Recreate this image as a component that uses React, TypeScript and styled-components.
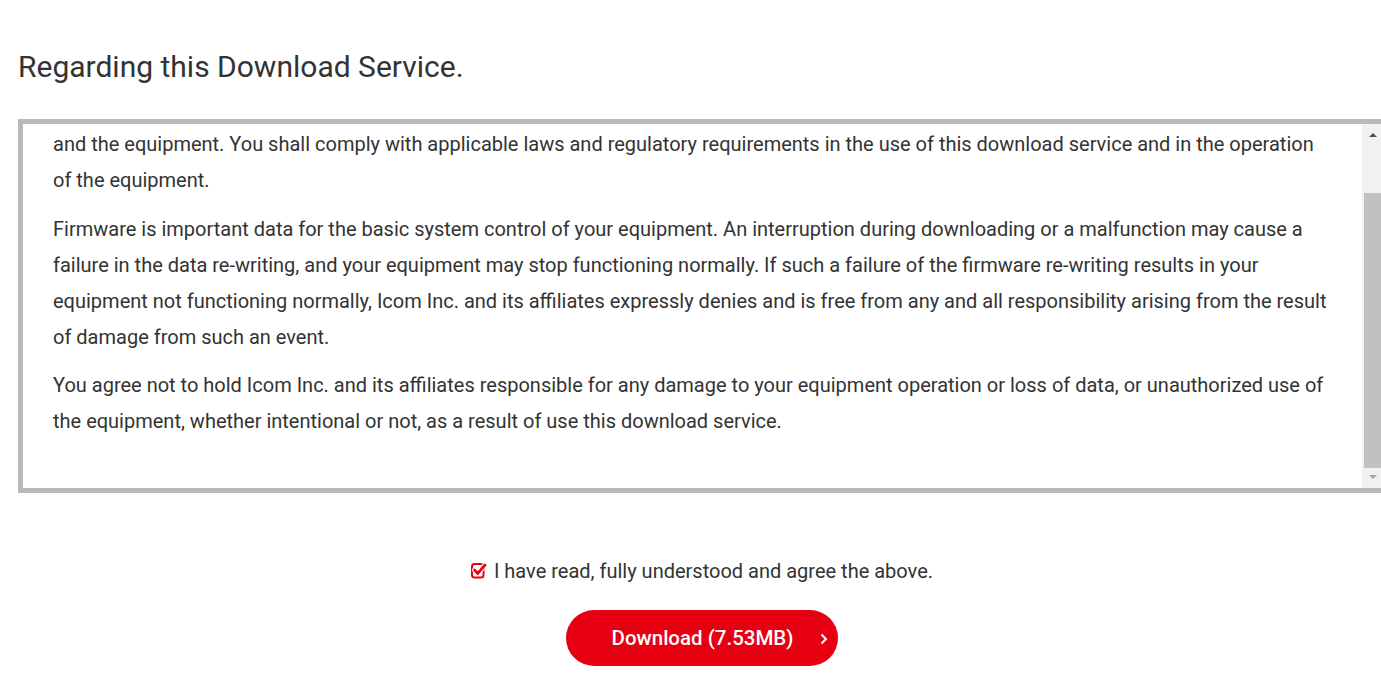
import React from "react";
import styled, { createGlobalStyle } from "styled-components";

const Global = createGlobalStyle`
  html, body {
    margin: 0;
    padding: 0;
    overflow: hidden;
    background: #ffffff;
  }
  body {
    font-family: Roboto, "Noto Sans", "Liberation Sans", sans-serif;
    color: #333333;
  }
`;

const Page = styled.main`
  width: 1368px;
  margin-left: 18px;
  display: flex;
  flex-direction: column;
`;

const Title = styled.h2`
  margin: 50px 0 0;
  font-size: 30px;
  line-height: 34px;
  font-weight: 400;
  color: #333333;
`;

const TermsBox = styled.section`
  margin-top: 35px;
  height: 364px;
  border: 5px solid #b9b9b9;
  display: flex;
  background: #ffffff;
`;

const TermsText = styled.div`
  flex: 1;
  overflow: hidden;
  display: flex;
  flex-direction: column;
  justify-content: flex-end;
  padding: 0 33px 49px 30px;
`;

const Para = styled.p`
  margin: 0 0 12.5px;
  font-size: 20px;
  line-height: 36px;
  color: #333333;
  &:last-child {
    margin-bottom: 0;
  }
`;

const ScrollBar = styled.div`
  width: 19px;
  flex: none;
  background: #f1f1f1;
  display: flex;
  flex-direction: column;
`;

const ArrowBtn = styled.div<{ $h: number; $pt: number }>`
  height: ${(p) => p.$h}px;
  flex: none;
  display: flex;
  justify-content: center;
  padding-left: 2px;
  padding-top: ${(p) => p.$pt}px;
  box-sizing: border-box;
`;

const Triangle = styled.span<{ $up?: boolean; $color: string }>`
  width: 0;
  height: 0;
  border-left: 4.5px solid transparent;
  border-right: 4.5px solid transparent;
  ${(p) =>
    p.$up
      ? `border-bottom: 4.5px solid ${p.$color};`
      : `border-top: 4.5px solid ${p.$color};`}
`;

const Track = styled.div`
  flex: 1;
  display: flex;
  flex-direction: column;
  justify-content: flex-end;
  padding-left: 2px;
`;

const Thumb = styled.div`
  height: 275px;
  background: #c1c1c1;
`;

const AgreeRow = styled.label`
  margin-top: 65px;
  align-self: center;
  display: inline-flex;
  align-items: center;
  gap: 5px;
  font-size: 20px;
  line-height: 27px;
  color: #333333;
  cursor: pointer;
`;

const CheckIcon = styled.svg`
  width: 18px;
  height: 17px;
  flex: none;
  margin-top: -2px;
`;

const DownloadButton = styled.button`
  margin-top: 25px;
  align-self: center;
  position: relative;
  height: 56px;
  padding: 0 45px 0 46px;
  border: none;
  border-radius: 28px;
  background: #e60012;
  color: #ffffff;
  font-family: Roboto, "Noto Sans", "Liberation Sans", sans-serif;
  font-size: 20.5px;
  font-weight: 500;
  cursor: pointer;
`;

const Chevron = styled.svg`
  position: absolute;
  right: 10px;
  top: 50%;
  width: 8px;
  height: 12px;
  margin-top: -5px;
`;

export default function App() {
  return (
    <>
      <Global />
      <Page>
        <Title>Regarding this Download Service.</Title>
        <TermsBox>
          <TermsText>
            <Para>
              Icom Inc. and its affiliates shall not be liable for any trouble
              arising from the use of this download service
              <br />
              and the equipment. You shall comply with applicable laws and
              regulatory requirements in the use of this download service and in
              the operation of the equipment.
            </Para>
            <Para>
              Firmware is important data for the basic system control of your
              equipment. An interruption during downloading or a malfunction may
              cause a failure in the data re-writing, and your equipment may stop
              functioning normally. If such a failure of the firmware re-writing
              results in your equipment not functioning normally, Icom Inc. and
              its affiliates expressly denies and is free from any and all
              responsibility arising from the result of damage from such an
              event.
            </Para>
            <Para>
              You agree not to hold Icom Inc. and its affiliates responsible for
              any damage to your equipment operation or loss of data, or
              unauthorized use of the equipment, whether intentional or not, as a
              result of use this download service.
            </Para>
          </TermsText>
          <ScrollBar>
            <ArrowBtn $h={17} $pt={9}>
              <Triangle $up $color="#505050" />
            </ArrowBtn>
            <Track>
              <Thumb />
            </Track>
            <ArrowBtn $h={20} $pt={7}>
              <Triangle $color="#a3a3a3" />
            </ArrowBtn>
          </ScrollBar>
        </TermsBox>
        <AgreeRow>
          <CheckIcon viewBox="0 0 18 17" aria-hidden="true">
            <rect
              x="1"
              y="2"
              width="11.5"
              height="13.5"
              rx="2.5"
              fill="none"
              stroke="#e60012"
              strokeWidth="2"
            />
            <path
              d="M3.5 8 L6.8 11.4 L14 3"
              fill="none"
              stroke="#ffffff"
              strokeWidth="5"
              strokeLinecap="round"
              strokeLinejoin="round"
            />
            <path
              d="M3.5 8 L6.8 11.4 L14 3"
              fill="none"
              stroke="#e60012"
              strokeWidth="2.8"
              strokeLinecap="round"
              strokeLinejoin="round"
            />
          </CheckIcon>
          I have read, fully understood and agree the above.
        </AgreeRow>
        <DownloadButton type="button">
          Download (7.53MB)
          <Chevron viewBox="0 0 8 12" aria-hidden="true">
            <polyline
              points="1.5,1.5 6,6 1.5,10.5"
              fill="none"
              stroke="#ffffff"
              strokeWidth="2"
            />
          </Chevron>
        </DownloadButton>
      </Page>
    </>
  );
}
